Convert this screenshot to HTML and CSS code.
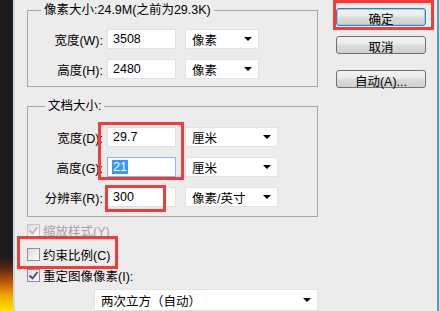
FILE: index.html
```html
<!DOCTYPE html>
<html lang="zh-CN">
<head>
  <meta charset="UTF-8">
  <title>图像大小</title>
  <link rel="stylesheet" href="styles.css">
</head>
<body>
  <div class="strip"></div>
  <div class="dialog">
    <div class="settings">
      <fieldset class="group group-pixels">
        <legend>像素大小:24.9M(之前为29.3K)</legend>
        <div class="row">
          <label>宽度(W):</label>
          <div class="field">3508</div>
          <div class="select short">像素<i class="arrow"></i></div>
        </div>
        <div class="row">
          <label>高度(H):</label>
          <div class="field">2480</div>
          <div class="select short">像素<i class="arrow"></i></div>
        </div>
      </fieldset>

      <fieldset class="group group-doc">
        <legend>文档大小:</legend>
        <div class="row">
          <label>宽度(D):</label>
          <div class="field">29.7</div>
          <div class="select">厘米<i class="arrow"></i></div>
        </div>
        <div class="row">
          <label>高度(G):</label>
          <div class="field focus"><span class="sel">21</span></div>
          <div class="select">厘米<i class="arrow"></i></div>
        </div>
        <div class="row">
          <label>分辨率(R):</label>
          <div class="field">300</div>
          <div class="select">像素/英寸<i class="arrow"></i></div>
        </div>
      </fieldset>

      <div class="check disabled">
        <span class="box"><svg width="11" height="11" viewBox="0 0 11 11"><polyline points="1.5,5.5 4.5,8.5 9.5,2" fill="none" stroke="#b8b8b8" stroke-width="1.8"/></svg></span>
        缩放样式(Y)
      </div>
      <div class="check constrain">
        <span class="box"></span>
        约束比例(C)
      </div>
      <div class="check resize">
        <span class="box"><svg width="11" height="11" viewBox="0 0 11 11"><polyline points="1.5,5.5 4.5,8.5 9.5,2" fill="none" stroke="#2c4f9c" stroke-width="1.8"/></svg></span>
        重定图像像素(I):
      </div>
      <div class="select resample">两次立方（自动）<i class="arrow"></i></div>
    </div>

    <div class="buttons">
      <button class="btn default">确定</button>
      <button class="btn">取消</button>
      <button class="btn auto">自动(A)...</button>
    </div>
  </div>
  <div class="edge"></div>

  <div class="mark mark-ok"></div>
  <div class="mark mark-size"></div>
  <div class="mark mark-res"></div>
  <div class="mark mark-check"></div>
</body>
</html>
```

FILE: styles.css
```css
* { box-sizing: border-box; }
html, body {
  margin: 0;
  height: 100%;
}
body {
  display: flex;
  position: relative;
  overflow: hidden;
  background: #ececec;
  color: #000;
  font-family: "Liberation Sans", "Noto Sans CJK SC", sans-serif;
  font-size: 12.5px;
}
.strip {
  width: 13px;
  background: linear-gradient(to bottom, #1a1a1a 0, #1a1a1a 256px, #5c2410 268px, #b8500a 281px, #eca000 294px, #ffe400 311px);
}
.dialog {
  flex: 1;
  display: flex;
  border-left: 2px solid #cbd7e4;
  padding-left: 12px;
}
.edge {
  width: 3px;
  border-left: 2px solid #3ea2e4;
  background: #dedede;
}
.settings {
  width: 291px;
  padding-top: 3px;
}

.group {
  margin: 0;
  min-width: 0;
  border: 1px solid #a6a6a6;
  padding: 12px 0 7px;
}
.group legend {
  padding: 0 3px;
  margin-left: 13px;
  line-height: 14px;
}
.group-doc {
  margin-top: 12px;
  padding: 14px 0 9px;
}
.group-doc legend { margin-left: 17px; }

.row {
  display: flex;
  align-items: center;
  height: 20px;
}
.row + .row { margin-top: 10px; }
.row label {
  width: 79px;
  padding-right: 4px;
  text-align: right;
}
.field {
  width: 69px;
  height: 20px;
  padding-left: 5px;
  line-height: 18px;
  background: #fff;
  border: 1px solid #dde2e8;
}
.field.focus {
  padding-left: 4px;
  border-color: #8cb8e4;
}
.sel {
  background: #3399ff;
  color: #fff;
  padding: 0 1px;
}
.select {
  display: flex;
  align-items: center;
  justify-content: space-between;
  width: 93px;
  height: 20px;
  margin-left: 9px;
  padding: 0 6px;
  background: #fff;
  border: 1px solid #e3e3e3;
}
.select.short { width: 74px; }
.arrow {
  width: 0;
  height: 0;
  border-left: 4px solid transparent;
  border-right: 4px solid transparent;
  border-top: 4px solid #000;
}

.check {
  display: flex;
  align-items: center;
  gap: 3px;
  height: 14px;
  margin-top: 6px;
}
.check.constrain { margin-top: 10px; }
.check.resize { margin-top: 7px; }
.check.disabled { color: #a3a3a3; }
.box {
  display: flex;
  align-items: center;
  justify-content: center;
  width: 13px;
  height: 13px;
  border: 1px solid #8e8f8f;
  background: linear-gradient(to bottom right, #dcdcdc, #fbfbfb);
}
.check.disabled .box { border-color: #c4c4c4; }
.resample {
  width: 224px;
  height: 22px;
  margin: 7px 0 0 67px;
}

.buttons {
  display: flex;
  flex-direction: column;
  width: 90px;
  margin-left: 18px;
  padding-top: 8px;
}
.btn {
  height: 18px;
  padding: 0;
  font: inherit;
  color: #000;
  border: 1px solid #707070;
  border-radius: 3px;
  background: linear-gradient(to bottom, #f3f3f3 0, #ebebeb 45%, #dddddd 50%, #cfcfcf 100%);
}
.btn.default {
  border-color: #3c7fb1;
  box-shadow: inset 0 0 0 1px #8fd2f5;
}
.btn + .btn { margin-top: 10px; }
.btn.auto { margin-top: 16px; }

.mark {
  position: absolute;
  border: 3px solid #f53a3a;
}
.mark-ok { left: 333px; top: 0; width: 101px; height: 30px; }
.mark-size { left: 98px; top: 122px; width: 86px; height: 58px; }
.mark-res { left: 105px; top: 185px; width: 61px; height: 27px; }
.mark-check { left: 17px; top: 236px; width: 101px; height: 33px; }
```
